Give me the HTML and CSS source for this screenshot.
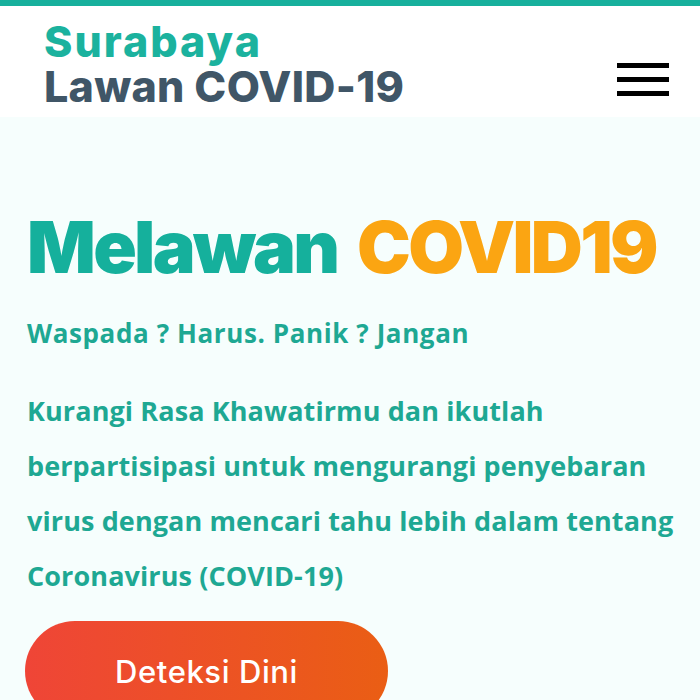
FILE: index.html
```html
<!DOCTYPE html>
<html lang="id">
<head>
<meta charset="utf-8">
<title>Surabaya Lawan COVID-19</title>
<link rel="stylesheet" href="styles.css">
</head>
<body>
<div class="topbar"></div>
<header class="header">
  <div class="logo">
    <div class="logo-top">Surabaya</div>
    <div class="logo-bottom">Lawan COVID-19</div>
  </div>
  <button class="burger" aria-label="Menu">
    <span></span><span></span><span></span>
  </button>
</header>
<main class="hero">
  <h1 class="title">Melawan <span class="accent">COVID19</span></h1>
  <p class="tagline">Waspada ? Harus. Panik ? Jangan</p>
  <p class="lead">Kurangi Rasa Khawatirmu dan ikutlah berpartisipasi untuk mengurangi penyebaran virus dengan mencari tahu lebih dalam tentang Coronavirus (COVID-19)</p>
  <a class="cta" href="#">Deteksi Dini</a>
</main>
</body>
</html>
```
FILE: styles.css
```css
html, body {
  margin: 0;
  padding: 0;
}
body {
  background: #f6fefd;
  overflow: hidden;
  height: 700px;
}
.topbar {
  height: 6px;
  background: #17b09c;
}
.header {
  background: #ffffff;
  height: 111px;
  display: flex;
  align-items: flex-start;
  justify-content: space-between;
  padding: 0 31px 0 44px;
  box-sizing: border-box;
}
.logo {
  font-family: Inter, sans-serif;
  font-weight: 800;
  font-size: 43px;
  line-height: 45px;
  letter-spacing: 0.3px;
  padding-top: 13px;
}
.logo-top {
  color: #1bb29e;
  letter-spacing: 2px;
}
.logo-bottom {
  color: #405667;
}
.burger {
  margin-top: 57px;
  width: 52px;
  padding: 0;
  border: 0;
  background: transparent;
  display: flex;
  flex-direction: column;
  gap: 9px;
}
.burger span {
  display: block;
  height: 5px;
  background: #000;
}
.hero {
  padding: 0 0 0 27px;
}
.title {
  margin: 90px 0 0;
  font-family: Inter, sans-serif;
  font-weight: 900;
  font-size: 72px;
  line-height: 80px;
  letter-spacing: -2.7px;
  word-spacing: 8px;
  color: #15b09c;
}
.accent {
  color: #fba512;
}
.tagline {
  margin: 28px 0 0;
  font-family: "Open Sans", sans-serif;
  font-weight: 700;
  font-size: 26px;
  line-height: 36px;
  letter-spacing: 0.6px;
  color: #1ea893;
}
.lead {
  margin: 32px 0 0;
  font-family: "Open Sans", sans-serif;
  font-weight: 700;
  font-size: 27px;
  line-height: 55px;
  letter-spacing: 0.1px;
  color: #1ea893;
  max-width: 664px;
}
.cta {
  display: flex;
  align-items: center;
  justify-content: center;
  width: 363px;
  height: 100px;
  margin: 18px 0 0 -2px;
  border-radius: 50px;
  background: linear-gradient(90deg, #ef4537, #ea5e14);
  color: #fff;
  text-decoration: none;
  font-family: Inter, sans-serif;
  font-weight: 500;
  font-size: 31px;
  letter-spacing: 0.6px;
}
```
